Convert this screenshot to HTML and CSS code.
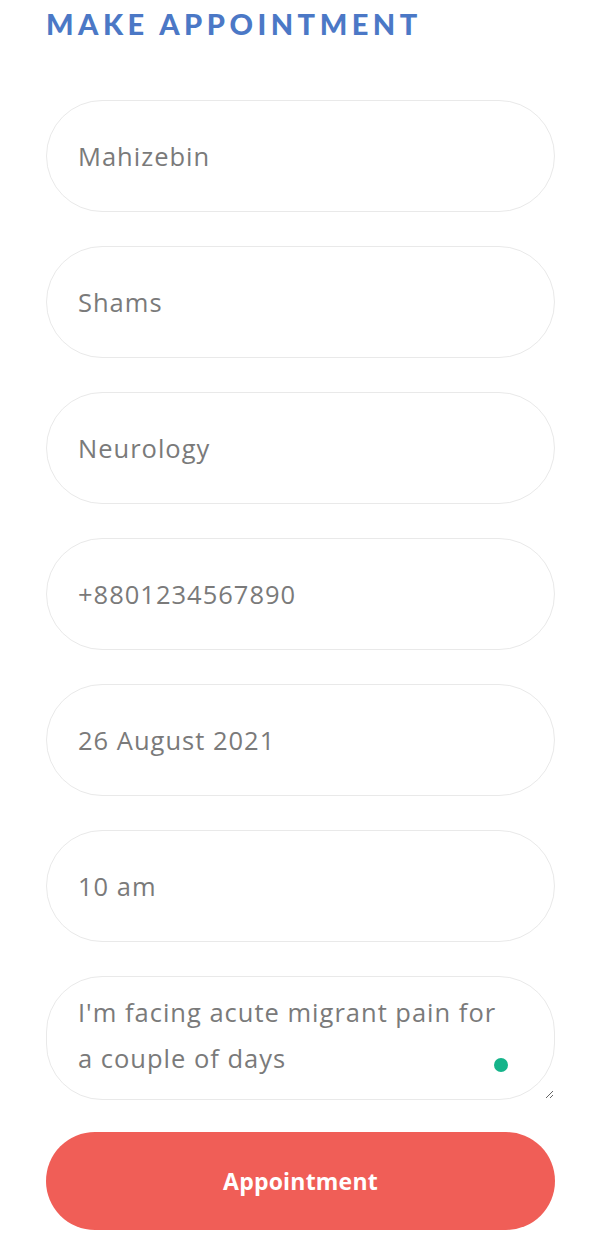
FILE: index.html
```html
<!DOCTYPE html>
<html lang="en">
<head>
    <meta charset="UTF-8">
    <title>Make Appointment</title>
    <link rel="stylesheet" href="styles.css">
</head>
<body>
    <div class="appointment">
        <h2 class="title">MAKE APPOINTMENT</h2>
        <form class="appointment-form">
            <input class="field" type="text" value="Mahizebin">
            <input class="field" type="text" value="Shams">
            <input class="field" type="text" value="Neurology">
            <input class="field" type="text" value="+8801234567890">
            <input class="field" type="text" value="26 August 2021">
            <input class="field" type="text" value="10 am">
            <div class="message-wrap">
                <textarea class="field message">I'm facing acute migrant pain for a couple of days</textarea>
                <span class="grammar-dot"></span>
            </div>
            <button class="submit" type="button">Appointment</button>
        </form>
    </div>
</body>
</html>
```

FILE: styles.css
```css
body {
    margin: 0;
    font-family: "Open Sans", Lato, sans-serif;
    background: #fff;
}

.appointment {
    padding: 6px 45px 0 46px;
}

.title {
    margin: 0;
    font-family: Lato, sans-serif;
    font-size: 29px;
    font-weight: 900;
    letter-spacing: 4.5px;
    color: #4b78c6;
    line-height: 36px;
}

.appointment-form {
    display: flex;
    flex-direction: column;
    gap: 34px;
    margin-top: 58px;
}

.field {
    box-sizing: border-box;
    width: 100%;
    height: 112px;
    padding: 0 31px;
    border: 1.5px solid #e9e9e9;
    border-radius: 56px;
    font-family: "Open Sans", Lato, sans-serif;
    font-size: 25.5px;
    letter-spacing: 1px;
    color: #7a7a7a;
    background: #fff;
    outline: none;
}

.message-wrap {
    position: relative;
}

.message {
    display: block;
    height: 124px;
    padding: 12px 40px 12px 31px;
    line-height: 46px;
    resize: vertical;
    overflow: hidden;
}

.grammar-dot {
    position: absolute;
    right: 47px;
    bottom: 28px;
    width: 14px;
    height: 14px;
    border-radius: 50%;
    background: #15b48a;
}

.submit {
    height: 98px;
    margin-top: -2px;
    border: none;
    border-radius: 49px;
    background: #f05e57;
    color: #fff;
    font-family: "Open Sans", Lato, sans-serif;
    font-size: 23px;
    font-weight: 700;
    letter-spacing: 0.2px;
    cursor: pointer;
}
```
